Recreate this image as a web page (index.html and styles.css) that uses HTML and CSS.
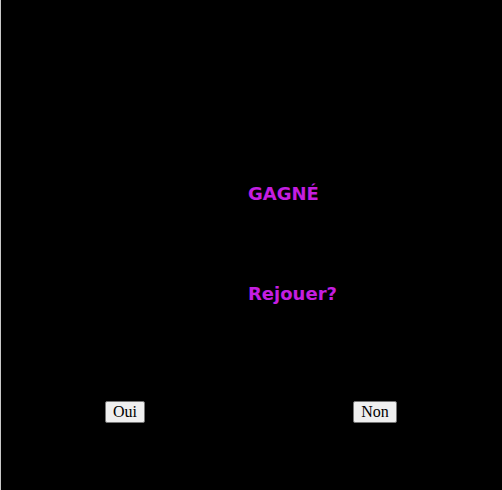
FILE: index.html
```html
<!DOCTYPE html>
<html lang="fr">

<head>
    <meta charset="UTF-8" />
    <meta name="viewport" content="width=device-width, initial-scale=1.0" />
    <title>Fin de partie</title>
    <link rel="stylesheet" href="styles.css">
</head>

<body>
    <div class="screen">
        <div class="message">
            <p class="result">GAGNÉ</p>
            <p class="question">Rejouer?</p>
        </div>
        <div class="choices">
            <div class="choice"><button id="btn-yes">Oui</button></div>
            <div class="choice"><button id="btn-no">Non</button></div>
        </div>
    </div>
</body>

</html>
```

FILE: styles.css
```css
:root {
    --bg-color: #000;
    --edge-color: #c8c8c8;
    --text-color: #c41ee0;
}

* {
    box-sizing: border-box;
    margin: 0;
    padding: 0;
}

body {
    background-color: var(--bg-color);
    border-left: 1px solid var(--edge-color);
    min-height: 100vh;
    font-family: "Liberation Serif", serif;
}

.screen {
    width: 500px;
    padding-top: 184px;
}

.message {
    padding-left: 247px;
    font-family: "DejaVu Sans", sans-serif;
    font-size: 18px;
    font-weight: bold;
    line-height: 20px;
    color: var(--text-color);
}

.question {
    margin-top: 80px;
}

.choices {
    display: grid;
    grid-template-columns: 250px 250px;
    margin-top: 97px;
    margin-left: -1px;
}

.choice {
    display: flex;
    justify-content: center;
}

button {
    font-family: "Liberation Serif", serif;
    font-size: 16px;
    color: #000;
    background: #efefef;
    border: 1px solid #767676;
    border-radius: 2px;
    padding: 1px 7px;
}
```
